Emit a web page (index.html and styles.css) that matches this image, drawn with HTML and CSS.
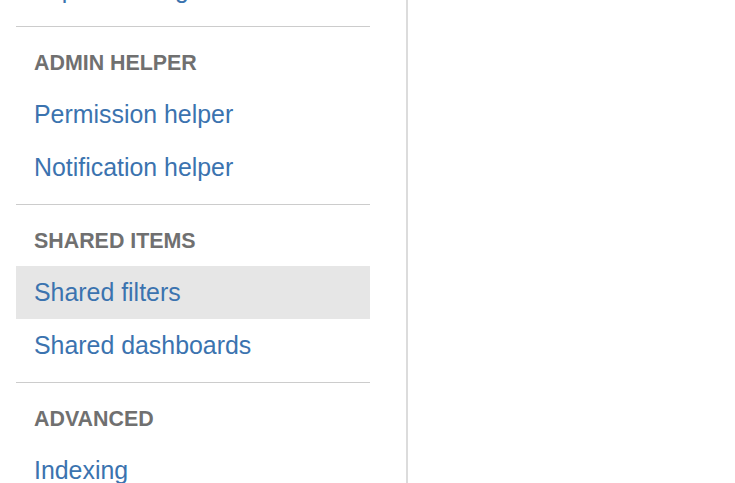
FILE: index.html
```html
<!DOCTYPE html>
<html lang="en">
<head>
    <meta charset="UTF-8">
    <meta name="viewport" content="width=device-width, initial-scale=1.0">
    <title>System administration</title>
    <link rel="stylesheet" href="styles.css">
</head>
<body>
    <div class="page">
        <nav class="sidebar">
            <div class="nav">
                <div class="nav-group">
                    <h2 class="nav-heading">Import and export</h2>
                    <a href="#" class="nav-item">Backup manager</a>
                    <a href="#" class="nav-item">Restore system</a>
                    <a href="#" class="nav-item">Import Settings</a>
                </div>

                <div class="nav-group">
                    <h2 class="nav-heading">Admin helper</h2>
                    <a href="#" class="nav-item">Permission helper</a>
                    <a href="#" class="nav-item">Notification helper</a>
                </div>

                <div class="nav-group">
                    <h2 class="nav-heading">Shared items</h2>
                    <a href="#" class="nav-item selected">Shared filters</a>
                    <a href="#" class="nav-item">Shared dashboards</a>
                </div>

                <div class="nav-group">
                    <h2 class="nav-heading">Advanced</h2>
                    <a href="#" class="nav-item">Indexing</a>
                    <a href="#" class="nav-item">Attachments</a>
                    <a href="#" class="nav-item">Events</a>
                </div>
            </div>
        </nav>

        <main class="content">
        </main>
    </div>
</body>
</html>
```

FILE: styles.css
```css
html, body {
    height: 100%;
    margin: 0;
    padding: 0;
    font-family: "Liberation Sans", Arial, sans-serif;
    background-color: #fff;
    overflow: hidden;
}

.page {
    display: flex;
    height: 100%;
}

.sidebar {
    width: 354px;
    padding: 0 36px 0 16px;
    border-right: 2px solid #dcdcdc;
    flex-shrink: 0;
}

/* page is scrolled down, first group is mostly above the fold */
.nav {
    margin-top: -204px;
}

.nav-group {
    border-top: 1px solid #cccccc;
    padding: 22px 0 10px;
}

.nav-group:first-child {
    border-top: none;
}

.nav-heading {
    margin: 0 0 11px;
    padding-left: 18px;
    font-size: 21.4px;
    line-height: 28px;
    font-weight: bold;
    text-transform: uppercase;
    color: #707070;
}

.nav-item {
    display: block;
    padding-left: 18px;
    font-size: 24.9px;
    line-height: 53px;
    color: #3b73af;
    text-decoration: none;
}

.nav-item.selected {
    background-color: #e6e6e6;
}

.content {
    flex: 1;
}
```
